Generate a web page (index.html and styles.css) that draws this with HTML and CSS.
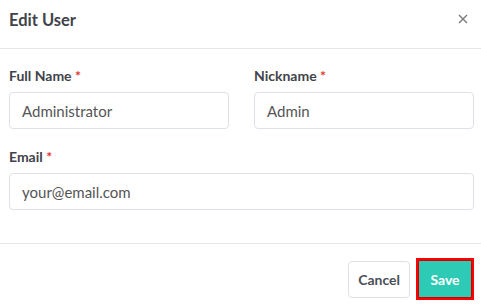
FILE: index.html
```html
<!DOCTYPE html>
<html lang="en">
<head>
  <meta charset="UTF-8">
  <title>Edit User</title>
  <link rel="stylesheet" href="styles.css">
</head>
<body>

  <div class="modal">
    <div class="modal-header">
      <h1>Edit User</h1>
      <button class="close" type="button" aria-label="Close">
        <svg width="10" height="10" viewBox="0 0 10 10">
          <path d="M1 1L9 9M9 1L1 9" stroke="#7a7a7a" stroke-width="1.4" fill="none"/>
        </svg>
      </button>
    </div>

    <form class="modal-body">
      <div class="row">
        <div class="field">
          <label for="fullname">Full Name <span class="req">*</span></label>
          <input type="text" id="fullname" value="Administrator">
        </div>
        <div class="field">
          <label for="nickname">Nickname <span class="req">*</span></label>
          <input type="text" id="nickname" value="Admin">
        </div>
      </div>
      <div class="field">
        <label for="email">Email <span class="req">*</span></label>
        <input type="email" id="email" value="your@email.com">
      </div>
    </form>

    <div class="modal-footer">
      <button class="btn btn-cancel" type="button">Cancel</button>
      <button class="btn btn-save" type="button">Save</button>
    </div>
  </div>

</body>
</html>
```

FILE: styles.css
```css
body {
  font-family: 'Lato', 'Open Sans', sans-serif;
  margin: 0;
  background: #fff;
  color: #444;
}

.modal {
  width: 481px;
}

.modal-header {
  height: 49px;
  box-sizing: border-box;
  display: flex;
  align-items: flex-start;
  justify-content: space-between;
  padding: 10px 13px 0 9px;
  border-bottom: 1px solid #e6e6e6;
}

h1 {
  margin: 0;
  font-size: 16.5px;
  line-height: 20px;
  font-weight: 700;
  color: #3f434a;
}

.close {
  border: none;
  background: none;
  padding: 0;
  margin-top: 4px;
  width: 10px;
  height: 10px;
  display: flex;
  cursor: pointer;
}

.modal-body {
  padding: 17px 7px 33px 9px;
  border-bottom: 1px solid #e6e6e6;
}

.row {
  display: grid;
  grid-template-columns: 1fr 1fr;
  gap: 25px;
  margin-bottom: 18px;
}

label {
  display: block;
  font-size: 14px;
  line-height: 20px;
  font-weight: 700;
  color: #3f434a;
  margin-bottom: 6px;
}

.req {
  color: #e3342f;
}

input {
  display: block;
  width: 100%;
  box-sizing: border-box;
  height: 37px;
  padding: 0 12px;
  border: 1px solid #dde2e8;
  border-radius: 4px;
  font-family: inherit;
  font-size: 15px;
  color: #555;
  background: #fff;
}

.modal-footer {
  display: flex;
  justify-content: flex-end;
  align-items: center;
  gap: 6px;
  padding: 14px 7px 0 0;
}

.btn {
  font-family: inherit;
  font-size: 14px;
  font-weight: 700;
  border-radius: 4px;
  height: 37px;
  cursor: pointer;
}

.btn-cancel {
  background: #fff;
  color: #4a4f57;
  border: 1px solid #dde2e8;
  padding: 0 9px;
}

.btn-save {
  background: #2dcab5;
  color: #fff;
  height: 42px;
  width: 58px;
  border: 2px solid #ff0000;
  border-radius: 0;
  box-shadow: inset 0 0 0 1px #c00;
}
```
